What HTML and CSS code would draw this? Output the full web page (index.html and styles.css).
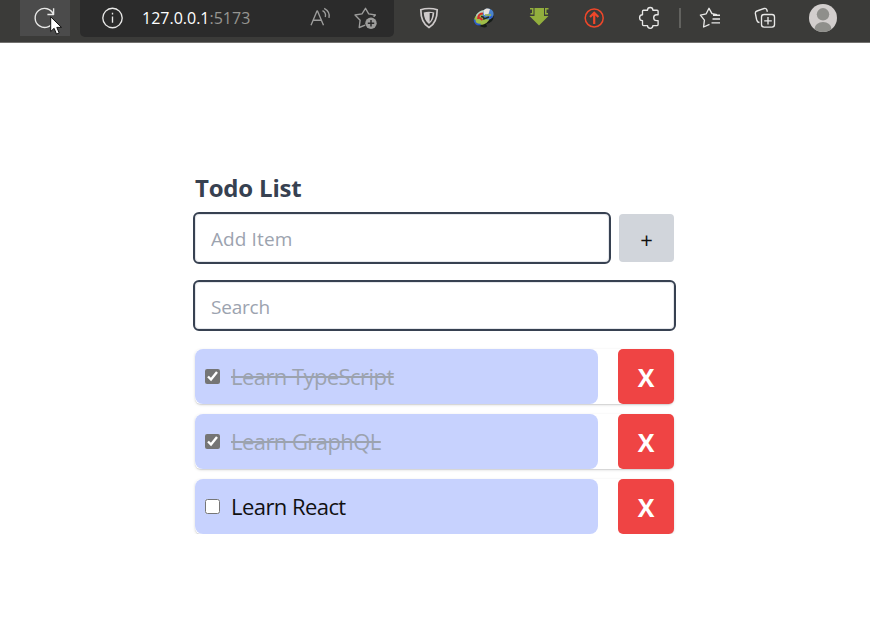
FILE: index.html
```html
<!DOCTYPE html>
<html lang="en">
<head>
<meta charset="utf-8">
<title>Todo List</title>
<link rel="stylesheet" href="styles.css">
</head>
<body>
<header class="toolbar">
  <div class="reload">
    <svg width="26" height="26" viewBox="0 0 26 26" class="line"><path d="M22.500 9.500A9.500 9.500 0 1 0 22.800 15.500M22.600 3.300v6.200h-6.200"/></svg>
    <svg class="cursor" width="13" height="20" viewBox="0 0 13 20"><path d="M.7.8v14.700l3.400-3.200 2.400 5.800 2.700-1.100-2.400-5.600h4.700z" fill="#fff" stroke="#111" stroke-width="1"/></svg>
  </div>
  <div class="address">
    <svg width="26" height="26" viewBox="0 0 26 26" class="line"><circle cx="13.5" cy="13" r="9.7"/><path d="M13.5 11.5v6.2M13.5 7.8v1.7"/></svg>
    <span class="url">127.0.0.1<span class="port">:5173</span></span>
    <svg class="line dim read" width="26" height="26" viewBox="0 0 26 26"><path d="M4 20.2 10 6h.5l6 14.2M6.200 15.200h8.200M15.500 5.700c2.300 1.200 3.500 3.600 2.800 6.300M17.200 3.300c4 2.200 5.700 5.400 4.800 9.600"/></svg>
    <svg class="dim" width="26" height="26" viewBox="0 0 26 26"><path class="line" d="m12.200 20.200-6 2.300.9-7.300L2 10l7-1.200 3.500-5.500 3.200 5.500 6.700 1.200-1.800 1.700"/><circle cx="18" cy="18.200" r="5.700" fill="#9d9d9c"/><path d="M18 15v6.400M14.800 18.200h6.400" stroke="#2b2b2b" stroke-width="1.500"/></svg>
  </div>
  <div class="extensions">
    <svg width="26" height="26" viewBox="0 0 26 26"><path d="M13 3.500c3 0 6 .5 8.200 1.300 0 8-1.800 14.200-8.200 17.800C6.600 19 4.800 12.800 4.800 4.800 7 4 10 3.500 13 3.500Z" fill="none" stroke="#cecaca" stroke-width="1.700"/><path d="M13 6.700c2 0 3.600.200 5.300.700-.300 5-1.800 9-5.300 11.500C9.500 16.400 8 12.400 7.700 7.400c1.700-.500 3.300-.700 5.300-.700Z" fill="#cecaca"/><path d="M13.700 8h2.800c-.300 4-1 6.500-2.800 8.700z" fill="#333"/></svg>
    <svg width="26" height="26" viewBox="0 0 26 26"><path d="M7 20c4 3 9 3 9 1l-1-2c5-1 8-4 7.500-8L15 12z" fill="#161c18"/><ellipse cx="11" cy="13.500" rx="8" ry="6" transform="rotate(-20 11 13.500)" fill="#9fbd48"/><circle cx="17" cy="9" r="5.600" fill="#4a83ce"/><path d="M12.500 5.500C14 3 17 3 19 4l-1.500 5-4.500 1z" fill="#e7e3de"/><path d="M5 10c2-3 5-4.500 8-5l-1 3.500C8.500 9 7 11 6.500 14.500z" fill="#b9d5c0"/><path d="M7 14c-.5-4 2.500-5.500 5-5.500M7.500 12l4 3" fill="none" stroke="#d13028" stroke-width="1.900"/><path d="M10 11.500c2 0 3 1 3 2.500l5-2" fill="none" stroke="#222d24" stroke-width="1.500"/><path d="M3.500 14.500c0 4 3 5.500 6 5M18.500 13l3-1.500" fill="none" stroke="#2c5bcc" stroke-width="1.800"/><path d="M14 10h6" stroke="#9fbd48" stroke-width="1.500"/></svg>
    <svg width="26" height="26" viewBox="0 0 26 26"><path d="M8.500 3h9.500v8H22.500L13 20.500 3.500 11h5zM4 3h3.500v6.500H4.500V8H6V4.500H4zM22.500 3H19v6.500h3V8h-1.500V4.500h2z" fill="#92ae3d"/></svg>
    <svg width="26" height="26" viewBox="0 0 26 26" fill="none" stroke="#ef472a"><circle cx="13.200" cy="13" r="9" stroke-width="1.500"/><path d="M13.200 19V8M9 12l4.200-4.300 4.200 4.300" stroke-width="2.200"/></svg>
    <svg class="line puzzle" width="26" height="26" viewBox="0 0 26 26"><path d="M6.500 5.200h4a2.700 2.700 0 0 1 5.400 0h4.200q1 0 1 1v3.600h-1.500a2.900 2.900 0 0 0 0 5.800h1.500v4q0 1-1 1h-4.200a2.700 2.700 0 0 1-5.400 0h-4q-1 0-1-1v-4a2.900 2.900 0 0 1 0-5.800V6.200q0-1 1-1Z"/></svg>
  </div>
  <div class="divider"></div>
  <svg class="line" width="26" height="26" viewBox="0 0 26 26"><path d="m12.500 19.300-5.900 2.700.8-6.900-4-5 5.800-1.300L12 3.300l3 5.300 5 1M16 10.200h7M15.500 14H23M14.500 17.800H23"/></svg>
  <svg class="line collections" width="26" height="26" viewBox="0 0 26 26"><rect x="9.500" y="9.500" width="13" height="12.600" rx="2.500"/><path d="M16 12v7.600M12.200 15.800h7.600M7.500 17.500C6 17.500 5 16 4.600 14.500L3.400 8.600Q3 6.700 5 6l7.200-2.500q1.900-.6 2.600 1.300l.6 1.900"/></svg>
  <svg class="avatar" width="28" height="28" viewBox="0 0 28 28"><defs><clipPath id="face"><circle cx="14" cy="14" r="14"/></clipPath></defs><circle cx="14" cy="14" r="14" fill="#d2cecd"/><g clip-path="url(#face)" fill="#8f8f8b"><circle cx="14" cy="10.300" r="6.200"/><ellipse cx="14" cy="25" rx="8.500" ry="7"/></g></svg>
</header>
<main class="app">
  <h1>Todo List</h1>
  <div class="add-row">
    <input class="field" type="text" placeholder="Add Item">
    <button class="add">+</button>
  </div>
  <input class="field search" type="text" placeholder="Search">
  <ul class="list">
    <li><label class="item done"><input type="checkbox" checked><span>Learn TypeScript</span></label><button class="remove">X</button></li>
    <li><label class="item done"><input type="checkbox" checked><span>Learn GraphQL</span></label><button class="remove">X</button></li>
    <li><label class="item"><input type="checkbox"><span>Learn React</span></label><button class="remove">X</button></li>
  </ul>
</main>
</body>
</html>
```
FILE: styles.css
```css
* { box-sizing: border-box; }
body { margin: 0; background: #fff; font-family: "Open Sans", "Noto Sans", sans-serif; overflow: hidden; }
button, input { font-family: inherit; }
svg { display: block; flex: none; }
.toolbar { display: flex; align-items: flex-start; height: 43px; padding-left: 20px; background: #3b3b39; border-bottom: 1px solid #72716f; }
.toolbar > svg { margin-top: 5px; }
.line { fill: none; stroke: #e8e8e7; stroke-width: 1.35; stroke-linejoin: round; }
.dim .line, .line.dim { stroke: #9d9d9c; }
.reload { position: relative; width: 50px; height: 36px; padding: 5px 11px; background: #4b4b4b; }
.cursor { position: absolute; left: 30px; top: 16px; }
.address { display: flex; align-items: center; width: 314px; height: 37px; margin-left: 10px; padding: 0 15px 1px 19px; background: #2b2b2b; border-radius: 0 0 5px 5px; }
.url { width: 110px; margin-left: 17px; color: #fff; font-size: 16px; letter-spacing: 0; white-space: nowrap; }
.port { color: #969692; }
.read { margin-left: 55px; margin-right: auto; }
.extensions { display: flex; gap: 29px; margin: 5px 0 0 22px; }
.puzzle { margin-left: 1px; margin-right: -1px; }
.divider { width: 2px; height: 20px; margin: 8px 16px 0 17px; background: #62625f; }
.collections { margin-left: 29px; }
.toolbar > .avatar { margin: 4px 0 0 31px; }
.app { width: 479px; margin: 130px 0 0 195px; }
h1 { height: 30px; margin: 0; color: #374151; font-size: 24px; line-height: 30px; font-weight: 700; letter-spacing: -.2px; }
.add-row { display: flex; gap: 10px; margin-top: 11px; }
.field { display: block; height: 48px; padding: 2px 15px 0; border: 1px solid #e5e7eb; border-radius: 4px; outline: 2px solid #374151; background: #fff; font-size: 19px; line-height: 28px; }
.field::placeholder { color: #9ca3af; opacity: 1; }
.add-row .field { width: 414px; letter-spacing: .1px; }
.add { width: 55px; height: 48px; padding: 1px 0 0; border: 0; border-radius: 4px; background: #d1d5db; color: #111; font-size: 22px; }
.search { width: 479px; height: 47px; margin-top: 20px; letter-spacing: -.2px; }
.list { display: grid; gap: 10px; margin: 20px 0 0; padding: 0; list-style: none; }
.list li { display: flex; justify-content: space-between; height: 55px; border-radius: 6px; box-shadow: 0 1px 3px rgba(0, 0, 0, .14), 0 1px 1px rgba(0, 0, 0, .08); }
.item { display: flex; align-items: center; width: 403px; padding-left: 10px; border-radius: 8px; background: #c7d2fe; color: #111; font-size: 22px; line-height: 30px; letter-spacing: -.56px; white-space: nowrap; }
.item input { width: 15px; height: 15px; margin: 0 11px 0 0; accent-color: #757575; }
.item span { padding-bottom: 1px; }
.item.done { color: #9ca3af; }
.done span { text-decoration: line-through; }
.remove { width: 56px; height: 55px; padding: 1px 0 0; border: 0; border-radius: 5px; background: #ef4444; color: #fff; font-size: 25px; font-weight: 700; }
```
